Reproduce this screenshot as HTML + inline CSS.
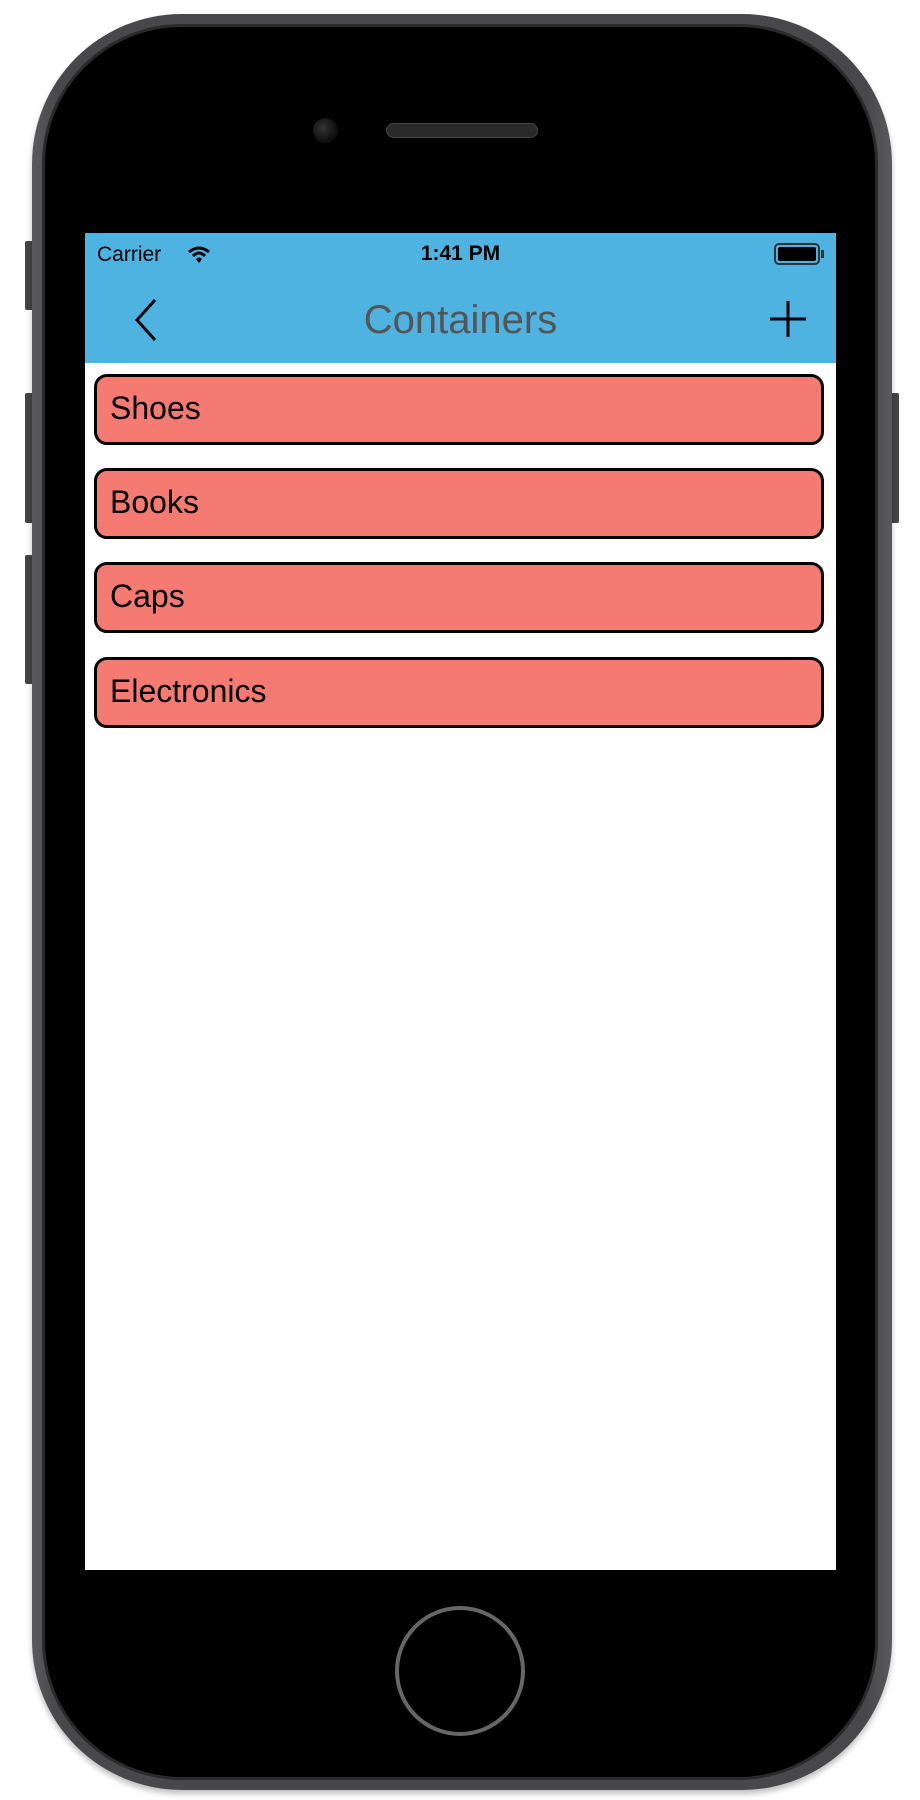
<!DOCTYPE html>
<html><head><style>
*{margin:0;padding:0;box-sizing:border-box}
body{width:920px;height:1800px;background:#fff;position:relative;overflow:hidden;font-family:"Liberation Sans",sans-serif}
.body{position:absolute;left:32px;top:14px;width:860px;height:1776px;border-radius:150px;background:linear-gradient(90deg,#5a5a5c,#48484a 3%,#48484a 97%,#5a5a5c);box-shadow:0 4px 6px rgba(0,0,0,.25)}
.bez{position:absolute;left:42px;top:24px;width:836px;height:1756px;border-radius:140px;background:#000;border:3px solid #2a2a2a}
.btn{position:absolute;background:#444;border-radius:2px}
.screen{position:absolute;left:85px;top:233px;width:751px;height:1337px;background:#fff;overflow:hidden}
.status{height:45px;background:#4eb3e0;position:relative;font-size:21px;color:#000}
.nav{height:85px;background:#4eb3e0;position:relative}
.item{position:absolute;left:9px;width:730px;height:71px;background:#f47a72;border:3px solid #000;border-radius:13px;font-size:32px;color:#000;padding-left:13px;line-height:63px}
</style></head><body>
<div class="btn" style="left:25px;top:241px;width:8px;height:69px"></div>
<div class="btn" style="left:25px;top:393px;width:8px;height:130px"></div>
<div class="btn" style="left:25px;top:555px;width:8px;height:129px"></div>
<div class="btn" style="left:891px;top:393px;width:8px;height:130px"></div>
<div class="body"></div>
<div class="bez"></div>
<div style="position:absolute;left:313px;top:118px;width:25px;height:25px;border-radius:50%;background:radial-gradient(circle at 40% 40%,#333,#111 60%,#000)"></div>
<div style="position:absolute;left:386px;top:123px;width:152px;height:15px;border-radius:8px;background:#2a2a2a;border:1px solid #444"></div>
<div style="position:absolute;left:395px;top:1606px;width:130px;height:130px;border-radius:50%;border:4px solid #666;background:#000"></div>
<div class="screen">
 <div class="status">
  <span style="position:absolute;left:12px;top:10px">Carrier</span>
  <svg style="position:absolute;left:102px;top:13px" width="24" height="18" viewBox="0 0 24 18"><path d="M2 6Q12-2 22 6" stroke="#000" stroke-width="3" fill="none"/><path d="M6 10Q12 4 18 10" stroke="#000" stroke-width="3" fill="none"/><path d="M9 13L12 17L15 13Q12 10 9 13Z" fill="#000"/></svg>
  <span style="position:absolute;left:0;width:751px;text-align:center;top:9px;font-weight:bold">1:41 PM</span>
  <div style="position:absolute;left:689px;top:10px;width:46px;height:22px;border:2px solid #333;border-radius:5px;padding:2px"><div style="background:#000;height:100%;border-radius:2px"></div></div>
  <div style="position:absolute;left:736px;top:17px;width:3px;height:8px;background:#333"></div>
 </div>
 <div class="nav">
  <svg style="position:absolute;left:48px;top:20px" width="26" height="44"><path d="M22 2L4 22L22 42" stroke="#000" stroke-width="3" fill="none"/></svg>
  <div style="position:absolute;left:0;width:751px;text-align:center;top:20px;font-size:40px;color:#555">Containers</div>
  <svg style="position:absolute;left:685px;top:23px" width="36" height="36"><path d="M18 0V36M0 18H36" stroke="#000" stroke-width="3"/></svg>
 </div>
 <div class="item" style="top:141px">Shoes</div>
 <div class="item" style="top:235px">Books</div>
 <div class="item" style="top:329px">Caps</div>
 <div class="item" style="top:424px">Electronics</div>
</div>
</body></html>
